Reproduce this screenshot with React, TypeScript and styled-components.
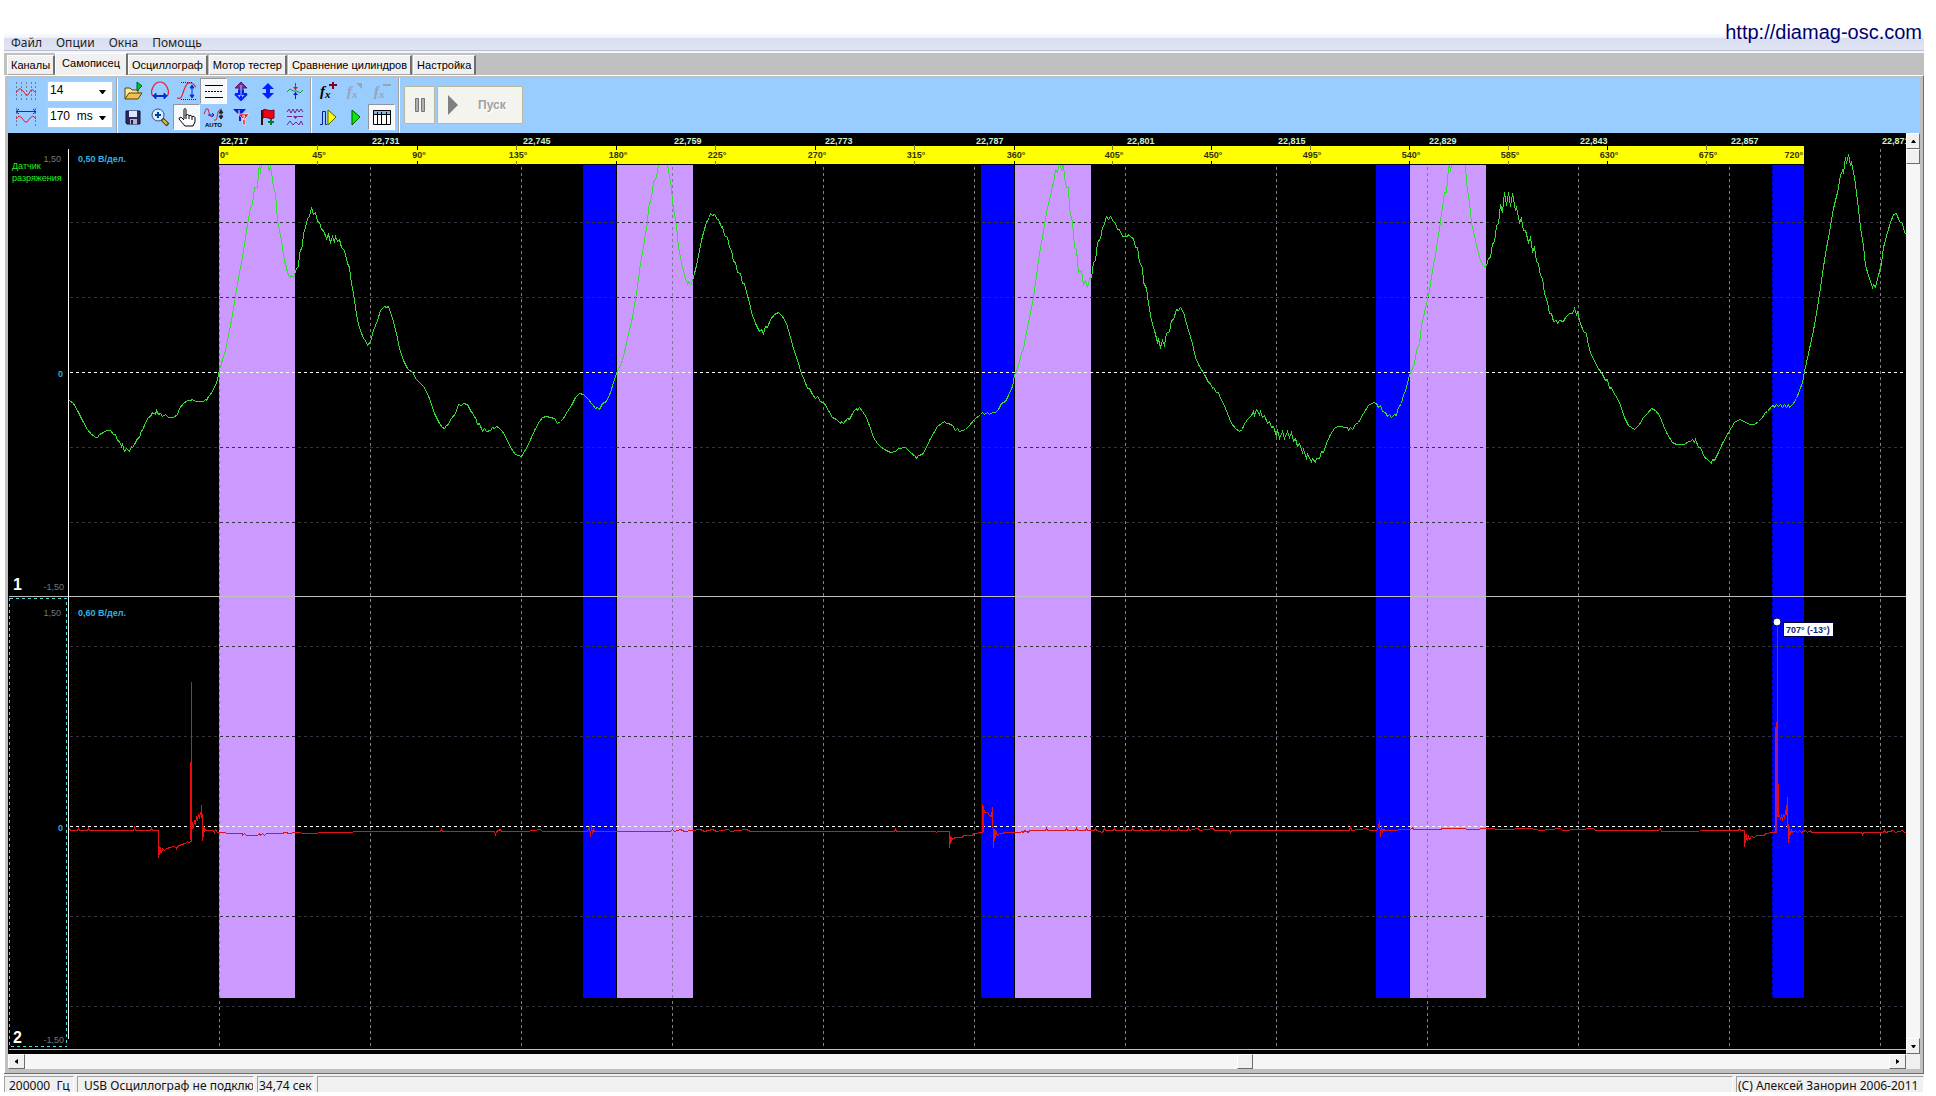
import React from "react";
import styled, { createGlobalStyle, css } from "styled-components";

const GlobalStyle = createGlobalStyle`
  * { box-sizing: border-box; }
  body { margin: 0; background: #fff; }
`;

const uiFont = `"Noto Sans", "Open Sans", sans-serif`;
const tabFont = `"Liberation Sans", Arial, sans-serif`;

/* ---------- shell ---------- */

const Window = styled.div`
  display: flex;
  flex-direction: column;
  margin: 0 12px 0 4px;
  font-family: ${uiFont};
  color: #111;
`;

const Header = styled.header`
  display: flex;
  align-items: flex-end;
  justify-content: space-between;
  height: 53px;
  padding-left: 7px;
  border-bottom: 2px solid #f4f5fa;
  box-shadow: inset 0 -1px 0 #b9bdd0;
  background: linear-gradient(#fff 32px, #eef2f9 38px, #d9dff0 38px, #e0e4f3 50px);
`;

const Menu = styled.nav`
  display: flex;
  gap: 14px;
`;

const MenuItem = styled.button`
  padding: 0;
  border: 0;
  background: none;
  font: 12px/16px ${uiFont};
  color: #222;
`;

const SiteLink = styled.a`
  margin: 0 2px 7px 0;
  font: 20px/24px ${tabFont};
  color: #000070;
  text-decoration: none;
`;

const Tabs = styled.div`
  display: flex;
  align-items: flex-end;
  gap: 1px;
  height: 22px;
  padding-left: 3px;
  background: #c0c0c0;
`;

const Tab = styled.button<{ $active?: boolean }>`
  height: 20px;
  padding: 0 3px;
  border: 0;
  border-top: 1px solid #fff;
  border-left: 1px solid #fff;
  border-right: 2px solid #6f6f6f;
  border-bottom: 1px solid #a8a8a8;
  background: #f0f0f0;
  font: 11px/18px ${tabFont};
  color: #000;
  ${(p) =>
    p.$active &&
    css`
      height: 22px;
      margin: 0 -1px;
      padding: 0 6px 3px;
      border-bottom: 0;
    `}
`;

const Sheet = styled.main`
  padding: 2px 3px 4px 4px;
  border-top: 1px solid #fff;
  border-right: 1px solid #6c6c6c;
  border-bottom: 1px solid #6c6c6c;
  background: #c0c0c0;
  box-shadow: inset 1px 0 0 #fff;
`;

/* ---------- toolbar ---------- */

const Toolbar = styled.div`
  display: flex;
  height: 55px;
  background: #99ccff;
`;

const Group = styled.div<{ $pad?: number }>`
  display: flex;
  padding: 0 ${(p) => p.$pad ?? 2}px;
  border-right: 1px solid #a0a0a0;
  box-shadow: 1px 0 0 #fff;
`;

const Combos = styled.div`
  display: grid;
  grid-template-columns: 30px 66px;
  grid-template-rows: 20px 20px;
  row-gap: 6px;
  column-gap: 2px;
  padding: 3px 0 0 5px;
  width: 104px;
`;

const ComboIcon = styled.label`
  display: flex;
  align-items: center;
  svg { display: block; }
`;

const ComboBox = styled.div`
  position: relative;
  height: 21px;
  border: 1px solid #c4c9d0;
  background: #fff;
`;

const Select = styled.select`
  display: block;
  width: 100%;
  height: 100%;
  padding: 0 2px 4px;
  border: 0;
  background: transparent;
  appearance: none;
  font: 12px/16px ${tabFont};
  color: #000;
`;

const Caret = styled.svg`
  position: absolute;
  right: 6px;
  top: 8px;
  pointer-events: none;
`;

const ToolGrid = styled.div<{ $cols: number }>`
  display: grid;
  grid-template-columns: repeat(${(p) => p.$cols}, 27px);
  grid-template-rows: 26px 26px;
`;

const Tool = styled.button<{ $pressed?: boolean }>`
  display: flex;
  align-items: center;
  justify-content: center;
  padding: 0;
  border: 1px solid transparent;
  background: none;
  svg { display: block; }
  ${(p) =>
    p.$pressed &&
    css`
      border-color: #90969c #fff #fff #90969c;
      background: #f6f8fb;
    `}
`;

const RunBar = styled.div`
  display: flex;
  align-items: center;
  gap: 2px;
  padding: 0 0 2px 5px;
`;

const RunButton = styled.button<{ $wide?: boolean }>`
  display: flex;
  align-items: center;
  justify-content: ${(p) => (p.$wide ? "flex-start" : "center")};
  gap: 20px;
  width: ${(p) => (p.$wide ? 86 : 31)}px;
  height: 38px;
  padding: 0 ${(p) => (p.$wide ? 9 : 0)}px;
  border: 1px solid #b8b8a2;
  border-radius: 1px;
  background: #f4f4ef;
  font: bold 12px/16px ${tabFont};
  color: #a0a0a0;
  text-shadow: 1px 1px 0 #fff;
`;

/* ---------- chart and scroll bars ---------- */

const Viewer = styled.div`
  display: grid;
  grid-template-columns: minmax(0, 1fr) 14px;
  grid-template-rows: auto 15px;
`;

const Chart = styled.svg`
  display: block;
  width: 100%;
  height: 921px;
  background: #000;
  shape-rendering: crispEdges;
  font: 9px "Liberation Sans", Arial, sans-serif;
`;

const Track = styled.div<{ $vertical?: boolean }>`
  display: flex;
  flex-direction: ${(p) => (p.$vertical ? "column" : "row")};
  background: #f6f6f6;
`;

const bevel = css`
  border: 1px solid;
  border-color: #fff #6c6c6c #6c6c6c #fff;
  background: #f0f0f0;
`;

const ArrowButton = styled.button`
  display: flex;
  align-items: center;
  justify-content: center;
  flex: none;
  width: 100%;
  height: 16px;
  padding: 0;
  ${bevel}
`;

const SideArrow = styled(ArrowButton)`
  width: 17px;
  height: 100%;
`;

const Gap = styled.div<{ $grow: number }>`
  flex: ${(p) => p.$grow} 0 0;
`;

const Thumb = styled.div`
  flex: none;
  min-width: 14px;
  min-height: 15px;
  ${bevel}
`;

const WideThumb = styled(Thumb)`
  width: 16px;
`;

const Corner = styled.div`
  background: #f0f0f0;
`;

/* ---------- status bar ---------- */

const Status = styled.footer`
  display: flex;
  gap: 3px;
  height: 18px;
  padding-top: 2px;
  background: #f0f0f0;
`;

const Cell = styled.div<{ $width?: number; $indent?: number }>`
  flex: ${(p) => (p.$width ? `0 0 ${p.$width}px` : "1 1 0")};
  min-width: 0;
  height: 16px;
  padding-left: ${(p) => p.$indent ?? 2}px;
  border-top: 1px solid #a0a0a0;
  border-left: 1px solid #a0a0a0;
  border-right: 1px solid #fff;
  overflow: hidden;
  white-space: pre;
  font: 12px/18px ${uiFont};
`;

/* ---------- icons ---------- */

const Icon = ({ children, w = 22 }: { children: React.ReactNode; w?: number }) => (
  <svg width={w} height="20" viewBox={`0 0 ${w} 20`} fill="none" aria-hidden="true">
    {children}
  </svg>
);

const UpDown = ({ x, top, bottom, color }: { x: number; top: number; bottom: number; color: string }) => (
  <path
    d={`M${x} ${top + 2}V${bottom - 2}M${x - 2} ${top + 3}L${x} ${top}L${x + 2} ${top + 3}ZM${x - 2} ${bottom - 3}L${x} ${bottom}L${x + 2} ${bottom - 3}Z`}
    stroke={color}
    fill={color}
  />
);

const GridWave = () => (
  <Icon>
    <path d="M1.5 1V20M6.5 1V20M11.5 1V20M16.5 1V20M20.5 1V20" stroke="#6f7c96" strokeDasharray="2 2" />
    <path d="M1 12L4 8H6L9 11L11 14H13L16 9H18L21 12" stroke="#e02030" />
  </Icon>
);
const SpanWave = () => (
  <Icon>
    <path d="M1.5 1V20M20.5 1V20" stroke="#6f7c96" strokeDasharray="2 2" />
    <path d="M1 4.5H21M4 2L1 4.5L4 7M18 2L21 4.5L18 7" stroke="#0030e0" />
    <path d="M1 12L4 9L7 11L10 15H12L15 11L18 9L21 12" stroke="#e02030" />
  </Icon>
);
const Folder = () => (
  <Icon>
    <path d="M3 18V7H8L10 9H16V12" fill="#f8e8a0" stroke="#604000" />
    <path d="M3 18L7 12H20L16 18Z" fill="#f0c050" stroke="#604000" />
    <path d="M15 1V10L20 5Z" fill="#00c040" stroke="#006020" />
  </Icon>
);
const Hump = () => (
  <Icon>
    <path d="M4 15C1 12 3 8 4 6C6 2 9 1 11 1S16 2 18 6C19 8 21 12 18 15" stroke="#e02030" strokeWidth="1.2" />
    <path d="M5 15H17" stroke="#0030e0" strokeWidth="2" />
    <path d="M7 12L4 15L7 18ZM15 12L18 15L15 18Z" fill="#0030e0" stroke="#0030e0" />
  </Icon>
);
const RiseSpan = () => (
  <Icon>
    <path d="M5 1.5H17M5 18.5H20" stroke="#222" strokeDasharray="1 1" />
    <path d="M1 17C6 19 6 14 8 9S11 1 15 2S18 5 20 6" stroke="#e02030" strokeWidth="1.2" />
    <UpDown x={16} top={4} bottom={17} color="#0030e0" />
  </Icon>
);
const Lines = () => (
  <Icon>
    <path d="M2 4.5H20M2 16.5H20" stroke="#000" />
    <path d="M2 10.5H20" stroke="#000" strokeDasharray="2 1" />
  </Icon>
);
const DoubleArrow = ({ outline }: { outline?: boolean }) => (
  <Icon>
    {outline ? (
      <>
        <path d="M11 1L17 7H13V13H9V7H5Z" fill="#70309a" stroke="#70106a" />
        <path d="M5 13H9V9M17 13H13V9M5 13L11 19L17 13M11 9V17" stroke="#0020ff" strokeWidth="2" />
        <path d="M11 4V15" stroke="#a8ccff" />
      </>
    ) : (
      <path d="M11 2L17 8H13V12H17L11 18L5 12H9V8H5Z" fill="#0020ff" />
    )}
  </Icon>
);
const TriggerCross = () => (
  <Icon>
    <path d="M11.5 2V9" stroke="#e01020" />
    <path d="M9 6H14L11.5 9Z" fill="#e01020" />
    <path d="M11.5 18V11" stroke="#0020e0" />
    <path d="M9 14H14L11.5 11Z" fill="#0020e0" />
    <path d="M3 11L6 8L9 10H13L16 12L19 9" stroke="#109040" />
  </Icon>
);
const Floppy = () => (
  <Icon>
    <path d="M4 4H18V17H5L4 16Z" fill="#2a2a60" stroke="#101030" />
    <rect x="7" y="4" width="8" height="6" fill="#dde6ff" />
    <rect x="8" y="12" width="7" height="5" fill="#b8b8c8" />
    <rect x="9" y="13" width="2" height="4" fill="#202040" />
  </Icon>
);
const Magnifier = () => (
  <Icon>
    <path d="M13 12L19 18" stroke="#504010" strokeWidth="4" />
    <path d="M14 13L18 17" stroke="#f0c040" strokeWidth="2" />
    <circle cx="9" cy="8" r="6" fill="#d4ecff" stroke="#405070" />
    <path d="M9 5V11M6 8H12" stroke="#0040a0" strokeWidth="2" />
  </Icon>
);
const Hand = () => (
  <Icon>
    <path
      d="M8 12V3C8 1 10 1 10 3V9C10 7 13 7 13 9C13 8 16 8 16 10C16 9 19 9 19 11V15L17 19H9L3 12C3 10 5 10 6 11L8 13"
      fill="#fff"
      stroke="#000"
    />
    <path d="M10 9V12M13 9V12M16 10V13" stroke="#000" />
  </Icon>
);
const AutoWave = () => (
  <Icon>
    <path d="M1 7L3 2L5 2L7 9L9 10" stroke="#e02030" />
    <path d="M5 8H11M9 6L11 8L9 10" stroke="#0020d0" />
    <path d="M11 13H13C15 12 13 2 19 2" stroke="#e02030" />
    <UpDown x={18} top={3} bottom={12} color="#222" />
    <text x="2" y="20" fontFamily={tabFont} fontSize="6" fontWeight="bold" fill="#000">AUTO</text>
  </Icon>
);
const Funnels = () => (
  <Icon>
    <path d="M3 2H16L11 8V14H9V8Z" fill="#0020e0" />
    <path d="M8 7H19L15 12V18H13V12Z" fill="#e01020" stroke="#fff" strokeWidth="0.6" />
    <path d="M9 3V7M12 9H15L13 12H15" stroke="#fff" />
  </Icon>
);
const Flag = () => (
  <Icon>
    <path d="M5 3V18" stroke="#301010" strokeWidth="2" />
    <path d="M6 3C9 1 11 5 17 3V11C12 13 10 9 6 11Z" fill="#f00010" stroke="#800010" />
    <path d="M14 12V18M11 15H17" stroke="#087830" strokeWidth="2" />
  </Icon>
);
const Ripples = () => (
  <Icon>
    <path d="M3 5L5 2L7 6L9 2L11 6L13 2L15 5L17 2L19 5" stroke="#7a2090" />
    <path d="M3 9.5H8M14 9.5H19" stroke="#7a2090" />
    <path d="M9 9H14L11.5 12Z" fill="#7a2090" />
    <path d="M3 18L6 14L9 18L12 15L15 18L17 14L19 18" stroke="#7a2090" />
  </Icon>
);
const Fx = ({ mark, off }: { mark: "plus" | "edit" | "minus"; off?: boolean }) => (
  <Icon>
    <text x="3" y="15" fontFamily={`"Liberation Serif", serif`} fontSize="15" fontStyle="italic" fontWeight="bold" fill={off ? "#9aa4b0" : "#000"}>
      f
    </text>
    <text x="8" y="17" fontFamily={`"Liberation Serif", serif`} fontSize="11" fontStyle="italic" fontWeight="bold" fill={off ? "#9aa4b0" : "#000"}>
      x
    </text>
    {mark === "plus" && <path d="M16 1V8M12 4H20" stroke="#800020" strokeWidth="2" />}
    {mark === "edit" && <path d="M12 2H18V8Z" fill="#9aa4b0" />}
    {mark === "minus" && <path d="M12 4H20" stroke="#9aa4b0" strokeWidth="2" />}
  </Icon>
);
const StepPlay = () => (
  <Icon>
    <path d="M3 17.5H5.500V4.500H8.500V17.500H10" stroke="#0020a0" />
    <path d="M11 3V18L19 10Z" fill="#ffff00" stroke="#506000" />
  </Icon>
);
const Play = () => (
  <Icon>
    <path d="M8 3V18L16 10Z" fill="#00f000" stroke="#005000" />
  </Icon>
);
const TableIcon = () => (
  <Icon>
    <rect x="2" y="3" width="18" height="15" fill="#fff" />
    <rect x="2" y="3" width="18" height="4" fill="#80b8e8" />
    <path d="M2.5 3.5H19.5V17.5H2.5ZM2 7.5H20M6.5 5V18M10.5 5V18M15.5 5V18" stroke="#000" />
  </Icon>
);

const chartTools: { label: string; icon: React.ReactNode; pressed?: boolean }[] = [
  { label: "Открыть", icon: <Folder /> },
  { label: "Период", icon: <Hump /> },
  { label: "Амплитуда", icon: <RiseSpan /> },
  { label: "Уровни", icon: <Lines />, pressed: true },
  { label: "Растянуть всё", icon: <DoubleArrow outline /> },
  { label: "Растянуть", icon: <DoubleArrow /> },
  { label: "Синхронизация", icon: <TriggerCross /> },
  { label: "Сохранить", icon: <Floppy /> },
  { label: "Увеличить", icon: <Magnifier /> },
  { label: "Перемещение", icon: <Hand />, pressed: true },
  { label: "Авто", icon: <AutoWave /> },
  { label: "Фильтр", icon: <Funnels /> },
  { label: "Метка", icon: <Flag /> },
  { label: "Сравнить", icon: <Ripples /> },
];

const mathTools: typeof chartTools = [
  { label: "Добавить функцию", icon: <Fx mark="plus" /> },
  { label: "Изменить функцию", icon: <Fx mark="edit" off /> },
  { label: "Удалить функцию", icon: <Fx mark="minus" off /> },
  { label: "Шаг", icon: <StepPlay /> },
  { label: "Воспроизвести", icon: <Play /> },
  { label: "Таблица", icon: <TableIcon />, pressed: true },
];

/* ---------- signal data ---------- */

// Intake vacuum samples, channel 1, as "x,y" pairs in window pixels.
const vacuum = `
69,400 73,403 77,410 82,420 87,429 91,434 93,435 95,437 97,437 99,434 103,432 106,430 110,430 113,434 115,434 117,440 119,441 121,446 122,444 124,451 126,448 129,451 131,446 132,447 134,444 137,438 139,437 141,430 142,430 145,422 148,417 150,416 152,412 155,414 156,410 158,414 160,413 162,416 165,414 168,417 173,417 177,414 179,408 183,403 187,400 190,400 192,399 195,401 203,401 205,399 206,400 208,396 210,394 213,389 216,382 218,375
219,369 225,350 230,325 234,302 238,277 242,257 246,230 249,213 250,207 252,204 254,187 257,187 258,172 259,163 260,173 261,163 265,157 269,171 270,165 271,172 273,187 275,193 277,220 281,240 284,260 287,272 289,276 290,277 291,275 293,277 296,268 298,266 299,253 302,245 303,233 305,227 307,218 309,216 311,207 313,214 315,212 317,221 319,222 321,229 323,230 326,238 327,236 328,234 330,242 332,236 334,242 335,236 337,241 339,239 341,247 344,250 347,263 349,267 351,283 353,293 355,307 357,320 360,330 363,338 365,340 367,345 370,341 373,330 377,320 380,310 384,306 386,307 388,306 392,318 396,333 399,348 403,360 407,368 413,373 415,378 418,381 424,387 429,398 434,413 439,423 442,427 444,428 446,425 447,425 451,418 455,413 458,404 461,405 463,403 467,404 471,412 472,412 474,417 475,417 477,424 479,423 482,431 484,428 486,431 490,430 492,427 494,428 496,426 498,427 502,431 506,438 510,447 515,454 521,456 524,451 527,446 531,437 534,430 539,421 542,417 546,416 550,417 554,418 557,423 560,421 563,418 567,411 571,405 575,397 579,393 583,394 587,398 592,404 595,408 597,407 599,409 602,403 606,401 610,392 613,382 616,373
622,360 627,338 632,317 636,293 640,263 644,240 647,222 648,207 651,197 653,182 656,177 658,165 663,150 667,165 671,187 672,202 676,225 678,247 682,267 685,278 687,283 688,281 690,284 692,281 694,273 696,265 698,255 701,240 703,232 706,222 709,217 710,213 712,215 714,214 717,219 718,219 721,227 722,226 724,235 727,237 729,247 731,250 733,261 735,262 737,272 740,273 742,283 744,283 746,292 749,302 751,312 755,323 759,331 761,329 763,333 765,326 767,327 770,319 774,314 778,312 782,316 786,323 790,337 793,348 798,363 801,373 804,380 807,388 809,388 812,394 815,398 817,396 820,401 824,403 828,410 832,417 836,419 840,423 841,421 843,423 847,418 849,419 852,413 854,410 856,408 857,410 859,407 862,411 866,417 870,428 873,437 877,443 880,446 884,449 890,452 895,451 898,448 905,447 910,452 915,456 916,458 918,455 922,454 926,447 929,440 933,433 937,426 941,423 944,421 946,423 948,423 952,425 955,430 957,428 959,431 965,429 969,425 974,419 980,414 982,412 984,414 987,412 989,414 992,412 995,412 998,409 1001,403 1005,401 1008,395 1012,386 1014,375
1018,365 1021,353 1023,348 1026,332 1029,317 1033,297 1036,275 1039,253 1042,237 1044,225 1047,207 1049,200 1052,185 1053,183 1055,169 1057,172 1059,164 1060,164 1061,170 1063,163 1064,177 1066,187 1068,187 1069,208 1072,222 1074,247 1076,249 1078,272 1081,270 1083,285 1084,281 1085,280 1087,287 1089,278 1091,277 1093,262 1095,260 1097,242 1100,238 1102,227 1104,224 1106,216 1108,219 1110,216 1113,221 1115,223 1117,229 1119,229 1122,236 1127,236 1128,234 1131,237 1133,238 1135,247 1137,247 1139,262 1142,267 1143,282 1146,288 1148,303 1151,320 1154,330 1157,342 1158,339 1160,347 1162,340 1164,345 1166,333 1169,331 1171,320 1173,319 1176,309 1178,310 1180,307 1183,312 1186,323 1188,330 1192,343 1195,357 1199,366 1204,374 1208,382 1210,383 1212,388 1213,387 1216,392 1218,392 1220,398 1223,403 1227,413 1231,423 1235,428 1239,431 1242,429 1243,425 1247,419 1251,415 1253,411 1254,415 1256,409 1259,414 1260,411 1262,417 1264,415 1267,423 1269,421 1271,427 1273,426 1276,436 1277,429 1279,438 1282,431 1284,438 1287,431 1289,437 1291,432 1293,441 1295,438 1297,446 1299,443 1302,452 1303,449 1306,458 1307,454 1311,461 1312,458 1315,462 1316,458 1319,458 1321,451 1323,452 1326,443 1330,434 1334,428 1337,426 1347,427 1348,430 1350,427 1352,429 1355,424 1358,422 1363,413 1368,405 1373,402 1376,403 1378,407 1380,405 1382,411 1385,412 1387,416 1389,414 1391,417 1394,414 1396,415 1398,407 1401,403 1403,395 1405,390 1409,375
1414,363 1416,350 1419,343 1421,325 1425,308 1429,290 1432,270 1436,248 1439,228 1441,213 1444,192 1446,192 1448,168 1449,164 1450,171 1451,165 1457,150 1465,165 1466,182 1469,202 1471,222 1475,240 1479,257 1482,264 1484,266 1486,265 1488,258 1490,257 1492,243 1494,242 1496,225 1498,223 1500,204 1502,212 1504,192 1506,205 1508,192 1510,206 1512,193 1515,210 1516,207 1519,222 1521,218 1523,230 1525,230 1528,242 1530,237 1532,251 1534,247 1536,261 1538,263 1540,275 1542,278 1544,293 1547,302 1549,313 1551,313 1553,321 1556,320 1557,323 1559,320 1563,321 1565,317 1569,313 1572,313 1574,308 1576,314 1577,312 1580,323 1583,331 1586,333 1588,345 1591,355 1594,360 1597,367 1601,372 1605,380 1607,379 1609,388 1611,387 1614,394 1616,396 1620,405 1624,417 1628,425 1631,427 1634,429 1639,424 1643,417 1647,413 1651,408 1655,410 1659,415 1663,425 1667,434 1672,442 1676,444 1684,444 1688,441 1690,441 1692,439 1694,442 1695,439 1698,447 1700,447 1704,457 1706,458 1711,463 1712,459 1714,460 1718,452 1722,443 1727,434 1731,427 1734,422 1739,419 1744,421 1749,424 1754,424 1758,421 1762,417 1765,412 1767,411 1771,406 1773,405 1774,407 1776,404 1778,406 1780,404 1782,407 1784,404 1786,407 1788,404 1789,407 1793,403 1796,398 1799,390 1802,382 1804,371
1808,353 1813,330 1817,307 1821,280 1825,253 1829,232 1833,208 1837,192 1840,175 1842,170 1843,172 1845,157 1846,163 1848,154 1850,165 1851,162 1854,177 1857,200 1860,227 1863,245 1865,265 1869,278 1872,287 1873,284 1875,287 1878,275 1881,263 1883,247 1887,232 1890,222 1893,214 1896,213 1899,221 1902,223 1904,232 1906,234`;

// Ignition samples, channel 2.
const ignition = `
69,828 70,830 77,830 78,828 79,830 87,830 88,828 89,830 133,830 134,827 135,830 150,830 151,828 152,830 158,830 158,857 159,846 159,854 160,847 161,852 162,848 164,850 166,848 170,847 173,846 176,847 176,849 177,846 181,844 185,843 187,841 188,842 191,841 191,681 191,836 192,822 193,827 194,820 195,824 196,816 197,819 198,815 199,818 200,812 201,817 201,805 202,822 202,840 203,826 203,836 204,828 205,830 213,830 214,832 215,829 217,832 219,832 232,833 242,833 242,835 244,833 246,835 257,835 259,833 260,835 262,833 264,835 266,833 280,833 286,832 288,833 295,832 305,833 330,832 376,831
440,831 441,829 442,831 494,831 495,834 496,831 500,829 501,831 526,831 540,829 542,831 587,831 589,826 590,836 591,825 592,833 593,829 594,831 670,831 672,829 674,831 680,829 684,831 700,829 704,831 712,829 716,831 728,829 730,831 746,829 750,831 894,831 895,829 896,831 935,831 936,832 937,831 949,831 949,847 950,836 950,843 951,837 951,841 952,838 956,837 962,837 963,835 972,835 973,833 982,832 982,804 983,818 983,806 984,812 987,812 989,815 991,816 992,807 993,847 994,829 994,840 995,830 995,837 996,832 997,835 999,833 1002,833 1004,832 1020,832 1021,831 1023,832 1024,830 1028,832 1029,830
1045,830 1046,828 1047,830 1065,830 1066,828 1067,830 1075,830 1076,828 1077,830 1085,830 1086,828 1087,830 1094,830 1095,828 1096,830 1102,832 1104,828 1105,830 1113,830 1114,828 1115,830 1122,830 1123,828 1124,830 1131,830 1132,828 1133,830 1140,830 1141,828 1142,830 1150,830 1151,828 1152,830 1159,830 1160,828 1161,830 1168,830 1169,828 1170,830 1177,830 1178,828 1179,830 1187,830 1188,828 1189,830 1196,828 1198,828 1199,830 1213,828 1214,830 1229,830 1230,832 1231,830 1349,830 1350,826 1351,830 1366,828 1369,830 1376,830 1378,827 1379,821 1380,836 1381,825 1382,832 1383,829 1385,830 1410,829 1412,827 1413,829 1440,829 1442,828 1460,828 1470,829 1489,828 1500,829 1530,828 1540,830 1560,828 1562,830 1593,828 1595,830 1658,830 1660,828 1661,831 1738,830 1739,828 1740,830 1744,830 1744,846 1745,834 1745,842 1746,836 1747,840 1748,836 1749,839 1751,836 1754,837 1756,835 1764,835 1765,833 1773,832 1776,832 1777,620 1777,816 1779,815 1780,818 1781,815 1782,820 1783,814 1784,818 1785,811 1786,813 1787,797 1787,812 1788,842 1788,824 1789,838 1789,826 1790,834 1791,830 1792,832 1795,830 1797,832 1799,830 1801,832 1805,830 1807,832 1810,830 1811,832 1861,832 1862,834 1863,832 1883,832 1884,830 1885,832 1893,830 1895,832 1902,830 1904,832 1906,832`;

const ignitionBursts: [number, number, number][] = [
  [190, 762, 78],
  [158, 846, 8],
  [159, 847, 6],
  [982, 812, 20],
  [1775, 727, 105],
  [1777, 784, 32],
  [1745, 834, 6],
];

const timeMarks = Array.from({ length: 12 }, (_, i) => ({
  x: 219 + 151 * i,
  text: `22,${717 + 14 * i}`,
}));

const degreeMarks = [317, 417, 516, 616, 715, 815, 914, 1014, 1112, 1211, 1310, 1409, 1508, 1607, 1706].map((x, i) => ({
  x,
  text: `${45 * (i + 1)}°`,
  major: i % 2 === 1,
}));

const intake = [219, 617, 1015, 1410];
const advance: [number, number][] = [
  [583, 33],
  [981, 33],
  [1376, 33],
  [1772, 32],
];

const channels = [
  { id: "1", top: 148, bottom: 596, zero: 372, step: 75, scale: "0,50 В/дел.", name: ["Датчик", "разряжения"] },
  { id: "2", top: 602, bottom: 1049, zero: 826, step: 90, scale: "0,60 В/дел.", name: [] },
];

const RULER_TOP = 146;
const BAND_TOP = 165;
const BAND_BOTTOM = 998;

// Level lines run past the widest screen; the chart clips them.
const FAR_RIGHT = 4000;

const Oscillogram = () => (
  <Chart role="img" aria-label="Осциллограмма">
    {/* Samples are stored in window pixels; the chart starts at 8,133. */}
    <g transform="translate(-8 -133)">
      {advance.map(([x, w]) => (
        <rect key={x} x={x} y={BAND_TOP} width={w} height={BAND_BOTTOM - BAND_TOP} fill="#0000ff" />
      ))}
      {intake.map((x) => (
        <rect key={x} x={x} y={BAND_TOP} width="76" height={BAND_BOTTOM - BAND_TOP} fill="#cc99ff" />
      ))}

      <g transform="translate(0.5 0.5)" fill="none">
        {timeMarks.map((m) => (
          <line key={m.x} x1={m.x} x2={m.x} y1={m.x > 1804 ? 148 : 166} y2="1047" stroke="#808080" strokeDasharray="3 3" />
        ))}
        <line x1="1772" x2="1772" y1="166" y2="998" stroke="#000060" strokeDasharray="3 3" />
        {channels.map((c) => (
          <g key={c.id}>
            {[-2, -1, 1, 2].map((n) => (
              <line key={n} x1="69" x2={FAR_RIGHT} y1={c.zero + n * c.step} y2={c.zero + n * c.step} stroke="#333340" strokeDasharray="3 3" />
            ))}
            <line x1="69" x2={FAR_RIGHT} y1={c.zero} y2={c.zero} stroke="#fff" strokeDasharray="3 3" />
            <line x1="8" x2={FAR_RIGHT} y1={c.bottom} y2={c.bottom} stroke="#c0c0c0" />
          </g>
        ))}
        <line x1="68" x2="68" y1="148" y2="1038" stroke="#fff" />
        <polyline points={vacuum} stroke="#33dd33" />
        <polyline points={ignition} stroke="#dd1515" />
      </g>
      {ignitionBursts.map(([x, y, h]) => (
        <rect key={x} x={x} y={y} width="2" height={h} fill={x === 1775 ? "#a01890" : "#ee0a0a"} />
      ))}
      <rect x="1777" y="624" width="1" height="160" fill="#a01890" />

      <rect x="219" y="140" width="1585" height="25" fill="#000" />
      <rect x="219" y={RULER_TOP} width="1585" height="18" fill="#ffff00" />
      {degreeMarks.map((m) => (
        <g key={m.x} fill={m.major ? "#000" : "#777733"}>
          <rect x={m.x} y="145" width="1" height="5" />
          <rect x={m.x} y="161" width="1" height="4" />
        </g>
      ))}
      <g fontWeight="bold" fill="#333300">
        <text x="220" y="158">0°</text>
        {degreeMarks.map((m) => (
          <text key={m.x} x={m.x + 2} y="158" textAnchor="middle">
            {m.text}
          </text>
        ))}
        <text x="1803" y="158" textAnchor="end">720°</text>
      </g>
      <g fontWeight="bold" fill="#d0f0d0">
        {timeMarks.map((m) => (
          <text key={m.x} x={m.x + 2} y="144">
            {m.text}
          </text>
        ))}
      </g>

      {channels.map((c) => (
        <g key={c.id}>
          <text x="61" y={c.top + 14} textAnchor="end" fill="#777">1,50</text>
          <text x="64" y={c.bottom - 6} textAnchor="end" fill="#777">-1,50</text>
          <text x="63" y={c.zero + 5} textAnchor="end" fontWeight="bold" fill="#2fa8d8">0</text>
          <text x="78" y={c.top + 14} fontWeight="bold" fill="#2fb4e4">{c.scale}</text>
          <text x="13" y={c.bottom - 6} fontSize="16" fontWeight="bold" fill="#fff">{c.id}</text>
          {c.name.map((line, i) => (
            <text key={line} x="12" y={169 + 12 * i} fill="#20f020">
              {line}
            </text>
          ))}
        </g>
      ))}
      <path d="M9.5 598.5H66.5V1046.5H9.5Z" fill="none" stroke="#50d8d8" strokeDasharray="3 3" />

      <circle cx="1777" cy="622" r="4" fill="#fff" stroke="#000040" shapeRendering="auto" />
      <rect x="1783" y="622" width="51" height="15" fill="#000040" />
      <rect x="1784" y="623" width="49" height="13" fill="#fff" />
      <text x="1786" y="633" fontWeight="bold" fill="#202070">707° (-13°)</text>
    </g>
  </Chart>
);

const Arrow = ({ d }: { d: string }) => (
  <svg width="7" height="7" viewBox="0 0 7 7" aria-hidden="true">
    <path d={d} fill="#000" />
  </svg>
);

const ComboField = ({ id, label, value, icon }: { id: string; label: string; value: string; icon: React.ReactNode }) => (
  <>
    <ComboIcon htmlFor={id} aria-label={label}>
      {icon}
    </ComboIcon>
    <ComboBox>
      <Select id={id} aria-label={label} defaultValue={value}>
        <option>{value}</option>
      </Select>
      <Caret width="7" height="4" viewBox="0 0 7 4" aria-hidden="true">
        <path d="M0 0H7L4 4H3Z" fill="#000" />
      </Caret>
    </ComboBox>
  </>
);

const tabs = ["Каналы", "Самописец", "Осциллограф", "Мотор тестер", "Сравнение цилиндров", "Настройка"];

export default function App() {
  return (
    <>
      <GlobalStyle />
      <Window>
        <Header>
          <Menu>
            {["Файл", "Опции", "Окна", "Помощь"].map((m) => (
              <MenuItem key={m}>{m}</MenuItem>
            ))}
          </Menu>
          <SiteLink href="http://diamag-osc.com">http://diamag-osc.com</SiteLink>
        </Header>

        <Tabs role="tablist">
          {tabs.map((t, i) => (
            <Tab key={t} role="tab" $active={i === 1} aria-selected={i === 1}>
              {t}
            </Tab>
          ))}
        </Tabs>

        <Sheet>
          <Toolbar>
            <Group>
              <Combos>
                <ComboField id="timebase" label="Развёртка" value="14" icon={<GridWave />} />
                <ComboField id="window" label="Окно" value={"170\u00a0 ms"} icon={<SpanWave />} />
              </Combos>
            </Group>
            <Group>
              <ToolGrid $cols={7}>
                {chartTools.map((t) => (
                  <Tool key={t.label} $pressed={t.pressed} aria-label={t.label}>
                    {t.icon}
                  </Tool>
                ))}
              </ToolGrid>
            </Group>
            <Group $pad={3}>
              <ToolGrid $cols={3}>
                {mathTools.map((t) => (
                  <Tool key={t.label} $pressed={t.pressed} aria-label={t.label}>
                    {t.icon}
                  </Tool>
                ))}
              </ToolGrid>
            </Group>
            <RunBar>
              <RunButton aria-label="Пауза">
                <svg width="12" height="16" viewBox="0 0 12 16" aria-hidden="true">
                  <path d="M1.5 1.5H4.5V14.5H1.5ZM7.500 1.500H10.500V14.500H7.500Z" fill="#b0b0b0" stroke="#777" />
                </svg>
              </RunButton>
              <RunButton $wide>
                <svg width="11" height="20" viewBox="0 0 11 20" aria-hidden="true">
                  <path d="M1 0L11 10L1 20Z" fill="#808080" />
                </svg>
                Пуск
              </RunButton>
            </RunBar>
          </Toolbar>

          <Viewer>
            <Oscillogram />
            <Track $vertical>
              <ArrowButton aria-label="Вверх">
                <Arrow d="M1 5H6L4 2H3Z" />
              </ArrowButton>
              <Thumb />
              <Gap $grow={1} />
              <ArrowButton aria-label="Вниз">
                <Arrow d="M1 2H6L4 5H3Z" />
              </ArrowButton>
            </Track>
            <Track>
              <SideArrow aria-label="Влево">
                <Arrow d="M5 1V6L2 4V3Z" />
              </SideArrow>
              <Gap $grow={1212} />
              <WideThumb />
              <Gap $grow={636} />
              <SideArrow aria-label="Вправо">
                <Arrow d="M2 1V6L5 4V3Z" />
              </SideArrow>
            </Track>
            <Corner />
          </Viewer>
        </Sheet>

        <Status>
          <Cell $width={70} $indent={4}>{"200000  Гц"}</Cell>
          <Cell $width={177} $indent={6}>USB Осциллограф не подключен</Cell>
          <Cell $width={57} $indent={1}>34,74 сек</Cell>
          <Cell />
          <Cell $width={188} $indent={1}>(C) Алексей Занорин 2006-2011</Cell>
        </Status>
      </Window>
    </>
  );
}
